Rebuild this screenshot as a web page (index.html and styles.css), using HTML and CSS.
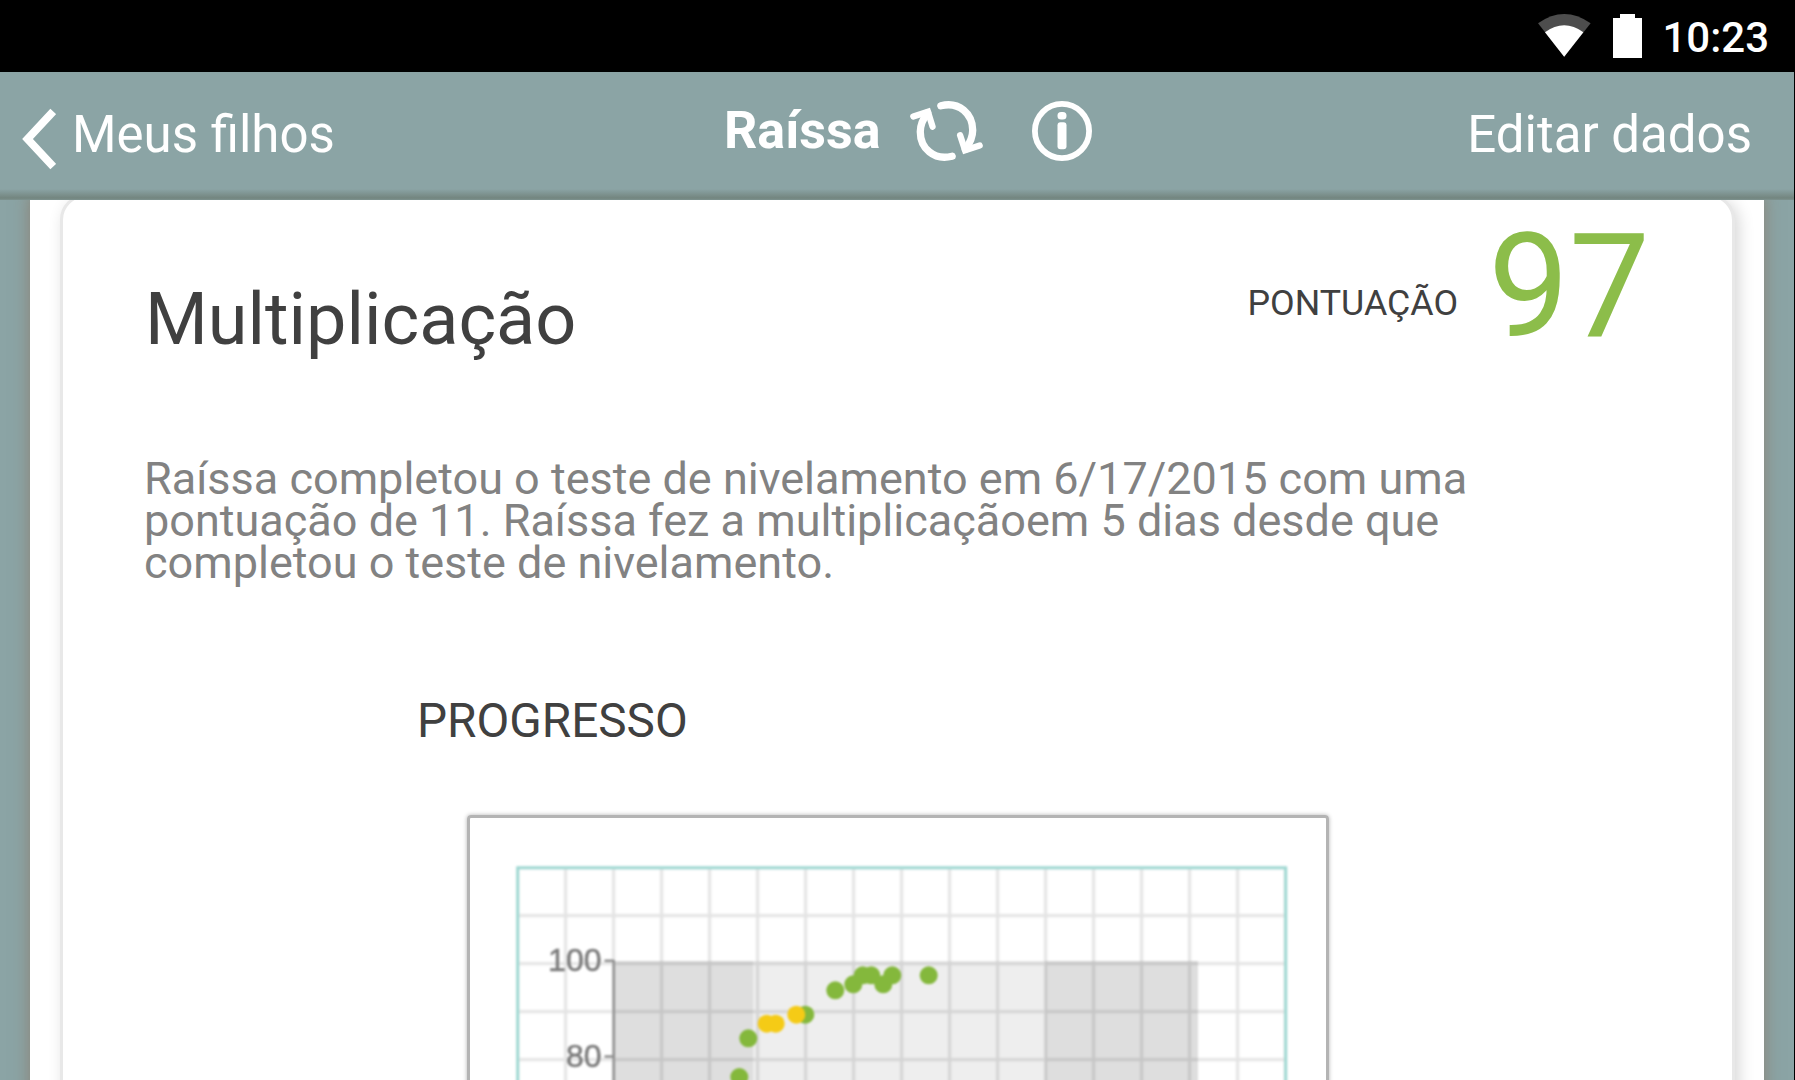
FILE: index.html
```html
<!DOCTYPE html>
<html lang="pt-BR">
<head>
    <meta charset="UTF-8">
    <meta name="viewport" content="width=device-width, initial-scale=1.0">
    <title>Raíssa - Multiplicação</title>
    <link rel="stylesheet" href="styles.css">
</head>
<body>
    <div class="status-bar">
        <svg class="wifi" viewBox="0 0 160 130">
            <path d="M0 28 Q79 -28 159 28 L79 129 Z" fill="#4d4d4d"/>
            <path d="M21 55 Q79 13 137 55 L79 129 Z" fill="#fff"/>
        </svg>
        <svg class="battery" viewBox="0 0 29 44">
            <path d="M7 0h15v4h7v40H0V4h7z" fill="#fff"/>
        </svg>
        <span class="clock">10:23</span>
    </div>

    <div class="screen">
        <div class="header">
            <div class="header-left">
                <svg class="back" viewBox="0 0 34 62">
                    <path d="M31.2 3.5 L5.5 31 L31.2 58.5" fill="none" stroke="#fff" stroke-width="7.8"/>
                </svg>
                <span class="back-label">Meus filhos</span>
            </div>
            <div class="header-title">
                <span class="name">Raíssa</span>
                <svg class="sync" viewBox="630 120 220 186">
                    <g fill="none" stroke="#fff" stroke-linecap="round">
                        <path d="M723 137 C778 123 819 161 819 211 C819 235 809 252 797 268" stroke-width="22"/>
                        <path d="M757 289 C702 303 661 265 661 215 C661 191 671 174 683 158" stroke-width="22"/>
                        <path d="M640 169 L684 155 L698 200" stroke-width="19"/>
                        <path d="M840 257 L796 271 L781 226" stroke-width="19"/>
                    </g>
                </svg>
                <svg class="info" viewBox="0 0 60 60">
                    <circle cx="30" cy="30" r="27.1" fill="none" stroke="#fff" stroke-width="5.8"/>
                    <rect x="25.5" y="11" width="9" height="7.6" rx="3.6" fill="#fff"/>
                    <rect x="25.5" y="21.3" width="9" height="27" rx="3" fill="#fff"/>
                </svg>
            </div>
            <div class="header-right">Editar dados</div>
        </div>

        <div class="content">
            <div class="panel">
                <div class="card">
                    <div class="card-top">
                        <h1 class="subject">Multiplicação</h1>
                        <div class="score">
                            <span class="score-label">PONTUAÇÃO</span>
                            <span class="score-value">97</span>
                        </div>
                    </div>
                    <p class="summary">Raíssa completou o teste de nivelamento em 6/17/2015 com uma<br>pontuação de 11. Raíssa fez a multiplicaçãoem 5 dias desde que<br>completou o teste de nivelamento.</p>
                    <h2 class="progress-title">PROGRESSO</h2>
                    <div class="chart-frame">
                        <svg class="chart" viewBox="516 867 772 233">
                            <defs>
                                <pattern id="grid" x="517.6" y="868.6" width="48" height="48" patternUnits="userSpaceOnUse">
                                    <path d="M0 0H48M0 48H48M0 0V48M48 0V48" stroke="#000" stroke-opacity=".11" stroke-width="3"/>
                                </pattern>
                            </defs>
                            <!-- shaded months -->
                            <rect x="613.5" y="962" width="139.5" height="138" fill="#dedede"/>
                            <rect x="753" y="962" width="292" height="138" fill="#eee"/>
                            <rect x="1045" y="962" width="153" height="138" fill="#dedede"/>
                            <rect x="518" y="869" width="768" height="231" fill="url(#grid)"/>
                            <path d="M517.7 1100V868.7H1285.7V1100" fill="none" stroke="#9fd8d2" stroke-width="3"/>
                            <!-- y axis -->
                            <path d="M613.7 961V1100M604.5 961.7H613.7M604.5 1057.5H613.7" fill="none" stroke="#8e8e8e" stroke-width="2.4"/>
                            <g class="axis-text" text-anchor="end">
                                <text x="601.5" y="972">100</text>
                                <text x="601.5" y="1067.7">80</text>
                            </g>
                            <g fill="#84b83c">
                                <circle cx="739.3" cy="1078" r="9"/>
                                <circle cx="748.3" cy="1039.3" r="9"/>
                                <circle cx="805.3" cy="1015.7" r="9"/>
                                <circle cx="835.3" cy="991.3" r="9"/>
                                <circle cx="853.3" cy="985.3" r="9"/>
                                <circle cx="862.7" cy="976.3" r="9"/>
                                <circle cx="871.3" cy="976.3" r="9"/>
                                <circle cx="883.3" cy="985.3" r="9"/>
                                <circle cx="892.3" cy="976.3" r="9"/>
                                <circle cx="928.7" cy="976.3" r="9"/>
                            </g>
                            <g fill="#f5cb16">
                                <circle cx="766.7" cy="1024.7" r="9"/>
                                <circle cx="775.7" cy="1024.7" r="9"/>
                                <circle cx="796.3" cy="1015.7" r="9"/>
                            </g>
                        </svg>
                    </div>
                </div>
            </div>
        </div>
    </div>
</body>
</html>
```

FILE: styles.css
```css
* {
    box-sizing: border-box;
}

body {
    margin: 0;
    height: 100vh;
    overflow: hidden;
    display: flex;
    flex-direction: column;
    background: #000;
    font-family: Roboto, sans-serif;
}

svg {
    display: block;
    flex: none;
}

.status-bar {
    height: 72px;
    flex: none;
    display: flex;
    justify-content: flex-end;
    align-items: flex-start;
    padding: 14px 26px 0 0;
    color: #fff;
}

.wifi {
    width: 53px;
    height: 43px;
}

.battery {
    width: 29px;
    height: 44px;
    margin: 0 20px 0 22px;
}

.clock {
    font-size: 42px;
    font-weight: 500;
    line-height: 48px;
}

.screen {
    flex: 1;
    min-height: 0;
    margin-right: 1px;
    display: flex;
    flex-direction: column;
    background: #8ba4a5;
}

.header {
    height: 128px;
    flex: none;
    display: flex;
    justify-content: space-between;
    color: #fff;
    font-size: 51px;
    line-height: 60px;
    background: linear-gradient(to bottom, #8ba4a5 117px, #73857f 126px, #7d928f 128px);
}

.header-left {
    width: 724px;
    display: flex;
    padding: 33px 0 0 22px;
}

.back {
    width: 34px;
    height: 62px;
    margin-top: 3px;
}

.back-label {
    margin-left: 16px;
}

.header-title {
    flex: 1;
    display: flex;
    padding-top: 28px;
}

.name {
    width: 156px;
    padding-top: 1px;
    font-size: 52px;
    font-weight: 700;
}

.sync {
    width: 73px;
    height: 62px;
    margin: 0 49px 0 30px;
}

.info {
    width: 60px;
    height: 60px;
    margin-top: 1px;
}

.header-right {
    padding: 33px 42px 0 0;
    text-align: right;
}

.content {
    flex: 1;
    min-height: 0;
    overflow: hidden;
    padding: 0 30px;
}

.panel {
    height: 1000px;
    padding: 0 29px 0 30px;
    background: #fff;
    box-shadow: 0 0 16px rgba(140, 125, 110, 0.9);
}

/* the card is scrolled a little under the header */
.card {
    height: 1000px;
    margin-top: -6px;
    padding: 6px 82px 0 82px;
    border: 3px solid #e8e8e8;
    border-radius: 26px;
    background: #fff;
    box-shadow: 4px 4px 16px rgba(0, 0, 0, 0.16);
}

.card-top {
    display: flex;
    justify-content: space-between;
    height: 255px;
}

.subject {
    margin: 75px 0 0;
    font-size: 72px;
    font-weight: 400;
    line-height: 84px;
    color: #404040;
}

.score {
    display: flex;
    align-items: flex-start;
}

.score-label {
    margin: 79px 30px 0 0;
    font-size: 35.8px;
    line-height: 42px;
    color: #404040;
}

.score-value {
    font-size: 144px;
    line-height: 168px;
    color: #8cbd4a;
}

.summary {
    margin: 0 0 0 -1px;
    font-size: 45px;
    line-height: 42px;
    white-space: nowrap;
    color: #828282;
}

.progress-title {
    margin: 109px 0 0 272px;
    font-size: 47.7px;
    font-weight: 400;
    line-height: 56px;
    color: #404040;
}

.chart-frame {
    width: 862px;
    height: 500px;
    margin: 66px 0 0 322px;
    padding: 48px 0 0 46px;
    border: 3px solid #b4b4b4;
    border-radius: 4px;
    box-shadow: 0 0 4px rgba(0, 0, 0, 0.3);
}

.chart {
    width: 772px;
    height: 233px;
    filter: blur(0.8px);
}

.axis-text {
    font-family: "Liberation Sans", sans-serif;
    font-size: 32px;
    fill: #7c7c7c;
    stroke: #7c7c7c;
    stroke-width: 0.6px;
}
```
